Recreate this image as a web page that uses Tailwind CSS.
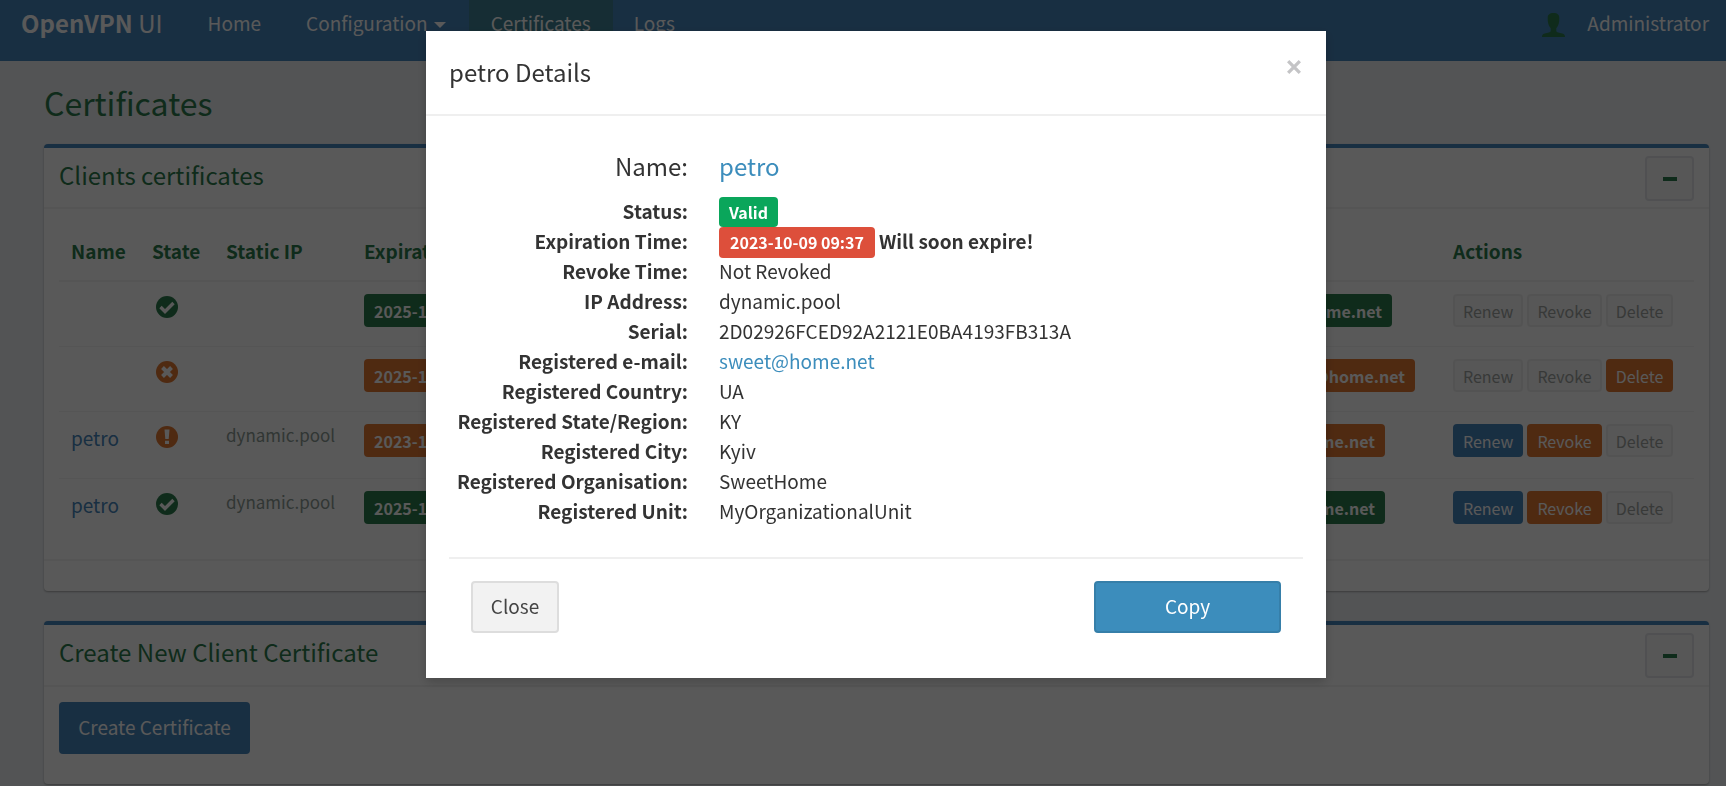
<!DOCTYPE html>
<html lang="en">
<head>
<meta charset="utf-8">
<title>OpenVPN UI - Certificates</title>
<script src="https://cdn.jsdelivr.net/npm/@tailwindcss/browser@4"></script>
</head>
<body class="min-h-screen bg-[#edf0f3] font-['Noto_Sans_CJK_SC','Open_Sans',sans-serif] text-[19px] leading-[30px] text-[#2d7d4d]">
<svg class="hidden">
  <symbol id="ok" viewBox="0 0 22 22"><circle cx="11" cy="11" r="11" fill="currentColor"/><path d="M4.500 11 L9 15.500 L17.500 7" fill="none" stroke="#fff" stroke-width="3.400"/></symbol>
  <symbol id="remove" viewBox="0 0 22 22"><circle cx="11" cy="11" r="11" fill="currentColor"/><path d="M6.500 6.500 L15.500 15.500 M15.500 6.500 L6.500 15.500" fill="none" stroke="#fff" stroke-width="4"/></symbol>
  <symbol id="warn" viewBox="0 0 22 22"><circle cx="11" cy="11" r="11" fill="currentColor"/><path d="M8.500 3.500h5l-.8 9.500h-3.400zM9 14.800h4V18H9z" fill="#fff"/></symbol>
</svg>

<header class="flex h-[61px] items-start bg-[#4786bd] text-white">
  <a href="#" class="flex h-[46px] items-center pr-[23px] pl-[21px] text-2xl whitespace-pre"><b>OpenVPN</b> UI</a>
  <nav class="flex h-[46px]">
    <a href="#" class="flex items-center px-[22px]">Home</a>
    <a href="#" class="flex items-center gap-[6px] px-[23px]">Configuration <svg class="mt-1 h-[6px] w-3" viewBox="0 0 12 6"><path d="M0 0h12L6 6z" fill="#fff"/></svg></a>
    <a href="#" class="flex items-center bg-[#3f8296] px-[22px]">Certificates</a>
    <a href="#" class="flex items-center px-[21px]">Logs</a>
  </nav>
  <a href="#" class="ml-auto flex h-[46px] items-center gap-[22px] pr-[17px]">
    <svg class="mt-1 h-6 w-[23px] text-[#2d7d4d]" viewBox="0 0 23 24"><path d="M11.500 0c4 0 6 2 5.800 5 .2 4-.8 8-3 10.200v2.800c0 1.300 3 1.600 6 2.600 2 .7 2.700 1.500 2.700 3.400H0c0-1.900.7-2.700 2.700-3.400 3-1 6-1.300 6-2.600v-2.800C6.500 13 5.500 9 5.700 5c-.2-3 1.800-5 5.800-5z" fill="currentColor"/></svg>
    Administrator
  </a>
</header>

<main class="pr-[17px] pl-11">
  <h1 class="flex h-[83px] items-center pb-[2px] text-[32px]">Certificates</h1>

  <section class="rounded border-t-4 border-[#4786bd] bg-white shadow-[0_1px_2px_rgba(0,0,0,0.3)]">
    <div class="flex h-[61px] items-start justify-between border-b-2 border-[#f4f4f4] px-[15px] pt-2">
      <h2 class="text-2xl leading-[38px]">Clients certificates</h2>
      <button aria-label="Collapse clients certificates" class="flex h-[45px] w-[49px] items-center justify-center rounded-[4px] border-2 border-[#e4e6ea] bg-[#fafafa]"><span class="h-1 w-[14px] bg-[#2d7d4d]"></span></button>
    </div>
    <div class="px-[15px] pt-4 pb-[15px]">
      <table class="w-full table-fixed text-left">
        <colgroup><col class="w-[81px]"><col class="w-[74px]"><col class="w-[138px]"><col class="w-[220px]"><col><col class="w-[190px]"><col class="w-[253px]"></colgroup>
        <thead>
          <tr class="h-14 border-b-2 border-[#f4f4f4]">
            <th class="px-3 pb-1">Name</th><th class="px-3 pb-1">State</th><th class="px-3 pb-1">Static IP</th><th class="px-3 pb-1 whitespace-nowrap">Expiration</th><th></th><th class="px-3 pb-1">E-mail</th><th class="px-3 pb-1">Actions</th>
          </tr>
        </thead>
        <tbody class="align-top">
          <tr class="h-[65px] border-b border-[#f4f4f4]">
            <td></td>
            <td class="px-4 pt-[14px]"><svg class="size-[22px]"><use href="#ok"/></svg></td>
            <td></td>
            <td class="px-3 pt-3"><span class="inline-block h-[33px] rounded-[4px] bg-[#2d7d4d] px-[10px] text-base leading-[35px] font-bold whitespace-nowrap text-white">2025-12-27 10:15</span></td>
            <td></td>
            <td class="pt-3 pr-[49px]"><span class="float-right h-[33px] rounded-[4px] bg-[#2d7d4d] px-[10px] text-base leading-[35px] font-bold text-white">sweet@home.net</span></td>
            <td class="px-3 pt-3"><div class="flex gap-1 text-base">
              <button disabled class="h-[33px] rounded-[4px] border-2 border-[#eee] bg-[#fafafa] px-2 leading-[31px] text-[#a0a4a2]">Renew</button>
              <button disabled class="h-[33px] rounded-[4px] border-2 border-[#eee] bg-[#fafafa] px-2 leading-[31px] text-[#a0a4a2]">Revoke</button>
              <button disabled class="h-[33px] rounded-[4px] border-2 border-[#eee] bg-[#fafafa] px-2 leading-[31px] text-[#a0a4a2]">Delete</button></div></td>
          </tr>
          <tr class="h-[65px] border-b border-[#f4f4f4]">
            <td></td>
            <td class="px-4 pt-[14px]"><svg class="size-[22px] text-[#e27833]"><use href="#remove"/></svg></td>
            <td></td>
            <td class="px-3 pt-3"><span class="inline-block h-[33px] rounded-[4px] bg-[#e27833] px-[10px] text-base leading-[35px] font-bold whitespace-nowrap text-white">2025-12-27 10:20</span></td>
            <td></td>
            <td class="pt-3 pr-[26px]"><span class="float-right h-[33px] rounded-[4px] bg-[#e27833] px-[10px] text-base leading-[35px] font-bold text-white">sweet@home.net</span></td>
            <td class="px-3 pt-3"><div class="flex gap-1 text-base">
              <button disabled class="h-[33px] rounded-[4px] border-2 border-[#eee] bg-[#fafafa] px-2 leading-[31px] text-[#a0a4a2]">Renew</button>
              <button disabled class="h-[33px] rounded-[4px] border-2 border-[#eee] bg-[#fafafa] px-2 leading-[31px] text-[#a0a4a2]">Revoke</button>
              <button class="h-[33px] rounded-[4px] border-2 border-[#e27833] bg-[#e27833] px-2 leading-[31px] text-white">Delete</button></div></td>
          </tr>
          <tr class="h-[67px] border-b border-[#f4f4f4]">
            <td class="px-3 pt-[11px]"><a href="#" class="text-[#4786bd]">petro</a></td>
            <td class="px-4 pt-[14px]"><svg class="size-[22px] text-[#e27833]"><use href="#warn"/></svg></td>
            <td class="px-3 pt-2 text-[17px] text-[#8c9b94]">dynamic.pool</td>
            <td class="px-3 pt-3"><span class="inline-block h-[33px] rounded-[4px] bg-[#e27833] px-[10px] text-base leading-[35px] font-bold whitespace-nowrap text-white">2023-10-09 09:37</span></td>
            <td></td>
            <td class="pt-3 pr-[56px]"><span class="float-right h-[33px] rounded-[4px] bg-[#e27833] px-[10px] text-base leading-[35px] font-bold text-white">sweet@home.net</span></td>
            <td class="px-3 pt-3"><div class="flex gap-1 text-base">
              <button class="h-[33px] rounded-[4px] border-2 border-[#4786bd] bg-[#4786bd] px-2 leading-[31px] text-white">Renew</button>
              <button class="h-[33px] rounded-[4px] border-2 border-[#e27833] bg-[#e27833] px-2 leading-[31px] text-white">Revoke</button>
              <button disabled class="h-[33px] rounded-[4px] border-2 border-[#eee] bg-[#fafafa] px-2 leading-[31px] text-[#a0a4a2]">Delete</button></div></td>
          </tr>
          <tr class="h-[66px]">
            <td class="px-3 pt-[11px]"><a href="#" class="text-[#4786bd]">petro</a></td>
            <td class="px-4 pt-[14px]"><svg class="size-[22px]"><use href="#ok"/></svg></td>
            <td class="px-3 pt-2 text-[17px] text-[#8c9b94]">dynamic.pool</td>
            <td class="px-3 pt-3"><span class="inline-block h-[33px] rounded-[4px] bg-[#2d7d4d] px-[10px] text-base leading-[35px] font-bold whitespace-nowrap text-white">2025-12-27 11:02</span></td>
            <td></td>
            <td class="pt-3 pr-[56px]"><span class="float-right h-[33px] rounded-[4px] bg-[#2d7d4d] px-[10px] text-base leading-[35px] font-bold text-white">sweet@home.net</span></td>
            <td class="px-3 pt-3"><div class="flex gap-1 text-base">
              <button class="h-[33px] rounded-[4px] border-2 border-[#4786bd] bg-[#4786bd] px-2 leading-[31px] text-white">Renew</button>
              <button class="h-[33px] rounded-[4px] border-2 border-[#e27833] bg-[#e27833] px-2 leading-[31px] text-white">Revoke</button>
              <button disabled class="h-[33px] rounded-[4px] border-2 border-[#eee] bg-[#fafafa] px-2 leading-[31px] text-[#a0a4a2]">Delete</button></div></td>
          </tr>
        </tbody>
      </table>
    </div>
    <div class="h-8 border-t-2 border-[#f4f4f4]"></div>
  </section>

  <section class="mt-[30px] rounded border-t-4 border-[#4786bd] bg-white shadow-[0_1px_2px_rgba(0,0,0,0.3)]">
    <div class="flex h-[62px] items-start justify-between border-b-2 border-[#f4f4f4] px-[15px] pt-2">
      <h2 class="text-2xl leading-[38px]">Create New Client Certificate</h2>
      <button aria-label="Collapse create certificate" class="flex h-[45px] w-[49px] items-center justify-center rounded-[4px] border-2 border-[#e4e6ea] bg-[#fafafa]"><span class="h-1 w-[14px] bg-[#2d7d4d]"></span></button>
    </div>
    <div class="px-[15px] pt-[15px] pb-[30px]">
      <button class="block h-[52px] w-[191px] rounded-[4px] bg-[#4786bd] pb-[2px] text-white">Create Certificate</button>
    </div>
  </section>
</main>

<div class="fixed inset-0 flex items-start justify-center bg-black/65 pt-[31px] pl-[26px]">
  <div role="dialog" aria-labelledby="dialog-title" class="w-[900px] bg-white text-[#333] shadow-[0_4px_10px_rgba(0,0,0,0.2)]">
    <div class="flex h-[85px] items-start justify-between border-b-2 border-[#efefef] px-[23px]">
      <h4 id="dialog-title" class="pt-[21px] text-2xl leading-10">petro Details</h4>
      <button aria-label="Close dialog" class="mt-[27px] p-[2px]"><svg class="size-[14px]" viewBox="0 0 12 12"><path d="M1 1l10 10M11 1L1 11" stroke="#c4c4c6" stroke-width="2.800"/></svg></button>
    </div>
    <div class="px-[23px] pt-[30px] pb-[45px]">
      <dl class="grid grid-cols-[239px_1fr] gap-x-[31px] pb-[31px]">
        <dt class="pb-[10px] text-right text-2xl leading-10">Name:</dt><dd class="pb-[10px] text-2xl leading-10"><a href="#" class="text-[#3c8dbc]">petro</a></dd>
        <dt class="text-right font-bold">Status:</dt><dd class="flex h-[30px] items-start pt-px"><span class="h-[30px] rounded-[4px] bg-[#0aa65b] px-[10px] text-base leading-[31px] font-bold text-white">Valid</span></dd>
        <dt class="text-right font-bold">Expiration Time:</dt><dd class="flex h-[30px] items-start gap-1 font-bold"><span class="mt-px h-[31px] rounded-[4px] bg-[#dd4f3b] px-[11px] text-base leading-[31px] text-white">2023-10-09 09:37</span> Will soon expire!</dd>
        <dt class="text-right font-bold">Revoke Time:</dt><dd>Not Revoked</dd>
        <dt class="text-right font-bold">IP Address:</dt><dd>dynamic.pool</dd>
        <dt class="text-right font-bold">Serial:</dt><dd>2D02926FCED92A2121E0BA4193FB313A</dd>
        <dt class="text-right font-bold">Registered e-mail:</dt><dd><a href="#" class="text-[#3c8dbc]">sweet@home.net</a></dd>
        <dt class="text-right font-bold">Registered Country:</dt><dd>UA</dd>
        <dt class="text-right font-bold">Registered State/Region:</dt><dd>KY</dd>
        <dt class="text-right font-bold">Registered City:</dt><dd>Kyiv</dd>
        <dt class="text-right font-bold">Registered Organisation:</dt><dd>SweetHome</dd>
        <dt class="text-right font-bold">Registered Unit:</dt><dd>MyOrganizationalUnit</dd>
      </dl>
      <div class="flex justify-between border-t-2 border-[#efefef] px-[22px] pt-[22px]">
        <button class="h-[52px] w-[88px] rounded-[4px] border-2 border-[#ddd] bg-[#f2f2f2] pb-[2px] text-[#444]">Close</button>
        <button class="h-[52px] w-[187px] rounded-[4px] border-2 border-[#367fa9] bg-[#3c8dbc] pb-[2px] text-white">Copy</button>
      </div>
    </div>
  </div>
</div>
</body>
</html>
